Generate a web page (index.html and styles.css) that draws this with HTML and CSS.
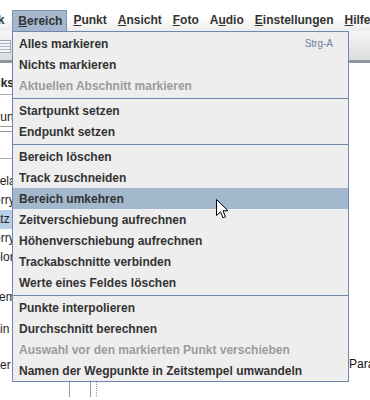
FILE: index.html
```html
<!DOCTYPE html>
<html lang="de">
<head>
    <meta charset="UTF-8">
    <meta name="viewport" content="width=device-width, initial-scale=1.0">
    <title>GpsPrune - Bereich</title>
    <link rel="stylesheet" href="styles.css">
</head>
<body>

<div class="window">
    <div class="menubar">
        <span class="menu first">Track</span>
        <span class="menu active"><u>B</u>ereich</span>
        <span class="menu"><u>P</u>unkt</span>
        <span class="menu"><u>A</u>nsicht</span>
        <span class="menu"><u>F</u>oto</span>
        <span class="menu">A<u>u</u>dio</span>
        <span class="menu"><u>E</u>instellungen</span>
        <span class="menu"><u>H</u>ilfe</span>
    </div>

    <div class="toolbar">
        <svg class="tool-icon" width="12" height="13" viewBox="0 0 12 13">
            <rect x="0" y="0.5" width="11.5" height="12" fill="#f4f6f9" stroke="#9aa6b6"/>
            <path d="M0 3.5H12M0 6.5H12M0 9.5H12" stroke="#a9b4c3"/>
        </svg>
    </div>

    <div class="main">
        <div class="side">
            <div class="side-title">Tracks</div>
            <div class="side-line"></div>
            <div class="side-field">Grund</div>
            <div class="side-box"></div>
            <div class="side-list">
                <div class="row r1">Relation</div>
                <div class="row r2">Berry</div>
                <div class="row r3 selected">Platz</div>
                <div class="row r2">Berry</div>
                <div class="row r4">Color</div>
            </div>
            <div class="info i1">Allgemein</div>
            <div class="info i2">min</div>
            <div class="info i3">Meter</div>
        </div>
        <div class="divider">
            <div class="grip"></div>
        </div>
        <div class="content">
            <div class="label">Parameter</div>
        </div>
    </div>

    <div class="popup">
        <div class="item"><span>Alles markieren</span><span class="shortcut">Strg-A</span></div>
        <div class="item">Nichts markieren</div>
        <div class="item disabled">Aktuellen Abschnitt markieren</div>
        <div class="sep"></div>
        <div class="item">Startpunkt setzen</div>
        <div class="item">Endpunkt setzen</div>
        <div class="sep"></div>
        <div class="item">Bereich löschen</div>
        <div class="item">Track zuschneiden</div>
        <div class="item selected">Bereich umkehren</div>
        <div class="item">Zeitverschiebung aufrechnen</div>
        <div class="item">Höhenverschiebung aufrechnen</div>
        <div class="item">Trackabschnitte verbinden</div>
        <div class="item">Werte eines Feldes löschen</div>
        <div class="sep"></div>
        <div class="item">Punkte interpolieren</div>
        <div class="item">Durchschnitt berechnen</div>
        <div class="item disabled">Auswahl vor den markierten Punkt verschieben</div>
        <div class="item">Namen der Wegpunkte in Zeitstempel umwandeln</div>
    </div>

    <svg class="cursor" width="13" height="20" viewBox="0 0 13 20">
        <path d="M0.5 0.5V16.5L4.5 12.8L7 18.8L9.5 17.8L7 11.8H12Z" fill="#fff" stroke="#000" stroke-linejoin="miter"/>
    </svg>
</div>

</body>
</html>
```

FILE: styles.css
```css
body {
    margin: 0;
    font-family: "Liberation Sans", Arial, sans-serif;
    font-size: 12px;
    color: #333;
    background: #fff;
}
.window {
    position: relative;
    width: 370px;
    height: 400px;
    overflow: hidden;
}

/* menu bar */
.menubar {
    display: flex;
    padding-top: 10px;
    height: 21px;
    background: linear-gradient(#fff, #fff 55%, #ececec);
    font-weight: bold;
    white-space: nowrap;
}
.menu {
    height: 21px;
    line-height: 21px;
    padding: 0 5px 0 6px;
    box-sizing: border-box;
}
.menu u {
    text-underline-offset: 1px;
}
.menu.first {
    margin-left: -33px;
    padding-right: 8px;
}
.menu.active {
    background: #a3b8cc;
    border: 1px solid #7f93b6;
    border-bottom: none;
    line-height: 20px;
    padding: 0 4px 0 5px;
}

/* toolbar */
.toolbar {
    height: 32px;
    background: linear-gradient(#f6f6f6, #dcdcdc);
    border-bottom: 3px solid #8e959c;
    display: flex;
    align-items: flex-start;
    padding-top: 9px;
    box-sizing: border-box;
}
.tool-icon {
    margin-left: -1px;
}

/* background panels */
.main {
    display: flex;
    height: 334px;
}
.side {
    width: 69px;
    flex: none;
    display: flex;
    flex-direction: column;
    white-space: nowrap;
    overflow: hidden;
    color: #222;
}
.side-title {
    font-weight: bold;
    margin: 12px 0 0 -24px;
    height: 16px;
    line-height: 16px;
}
.side-line {
    height: 0;
    border-top: 1px solid #b0b0b0;
    margin-top: 3px;
}
.side-field {
    margin: 15px 0 0 -13px;
    height: 14px;
    line-height: 14px;
}
.side-box {
    height: 4px;
    border-top: 1px solid #9a9a9a;
    border-bottom: 1px solid #9a9a9a;
    margin-top: 2px;
}
.side-list {
    margin-top: 26px;
    border-top: 1px solid #b0b0b0;
    padding-top: 13px;
}
.row {
    height: 19px;
    line-height: 19px;
}
.row.r1 { text-indent: -9px; }
.row.r2 { text-indent: -14px; }
.row.r3 { text-indent: -17px; }
.row.r4 { text-indent: -15px; }
.row.selected {
    background: #b8cfe5;
}
.info {
    height: 14px;
    line-height: 14px;
}
.info.i1 {
    margin: 23px 0 0 -21px;
}
.info.i2 {
    margin: 18px 0 0 -10px;
}
.info.i3 {
    margin: 22px 0 0 -20px;
}

.divider {
    width: 31px;
    flex: none;
    border-left: 1px solid #9a9a9a;
    box-sizing: border-box;
    display: flex;
    justify-content: flex-end;
}
.grip {
    width: 5px;
    margin-right: 3px;
    border-left: 1px solid #9a9a9a;
    border-right: 1px dotted #9a9a9a;
}
.content {
    flex: 1;
    display: flex;
    flex-direction: column;
    justify-content: flex-end;
    padding-bottom: 26px;
    color: #111;
}
.label {
    padding-left: 249px;
    white-space: nowrap;
}

/* dropdown menu */
.popup {
    position: absolute;
    left: 12px;
    top: 31px;
    width: 337px;
    box-sizing: border-box;
    border: 1px solid #7186ae;
    background: #eeeeee;
    padding-top: 1px;
    font-weight: bold;
    white-space: nowrap;
}
.item {
    display: flex;
    justify-content: space-between;
    align-items: center;
    height: 21px;
    padding: 0 15px 0 6px;
}
.item.disabled {
    color: #9b9b9b;
}
.item.selected {
    background: #a3b8cc;
}
.shortcut {
    font-weight: normal;
    font-size: 10px;
    color: #6a80a8;
}
.sep {
    height: 4px;
    padding-top: 2px;
    box-sizing: border-box;
}
.sep::before {
    content: "";
    display: block;
    height: 1px;
    background: #7186ae;
}

.cursor {
    position: absolute;
    left: 216px;
    top: 199px;
}
```
